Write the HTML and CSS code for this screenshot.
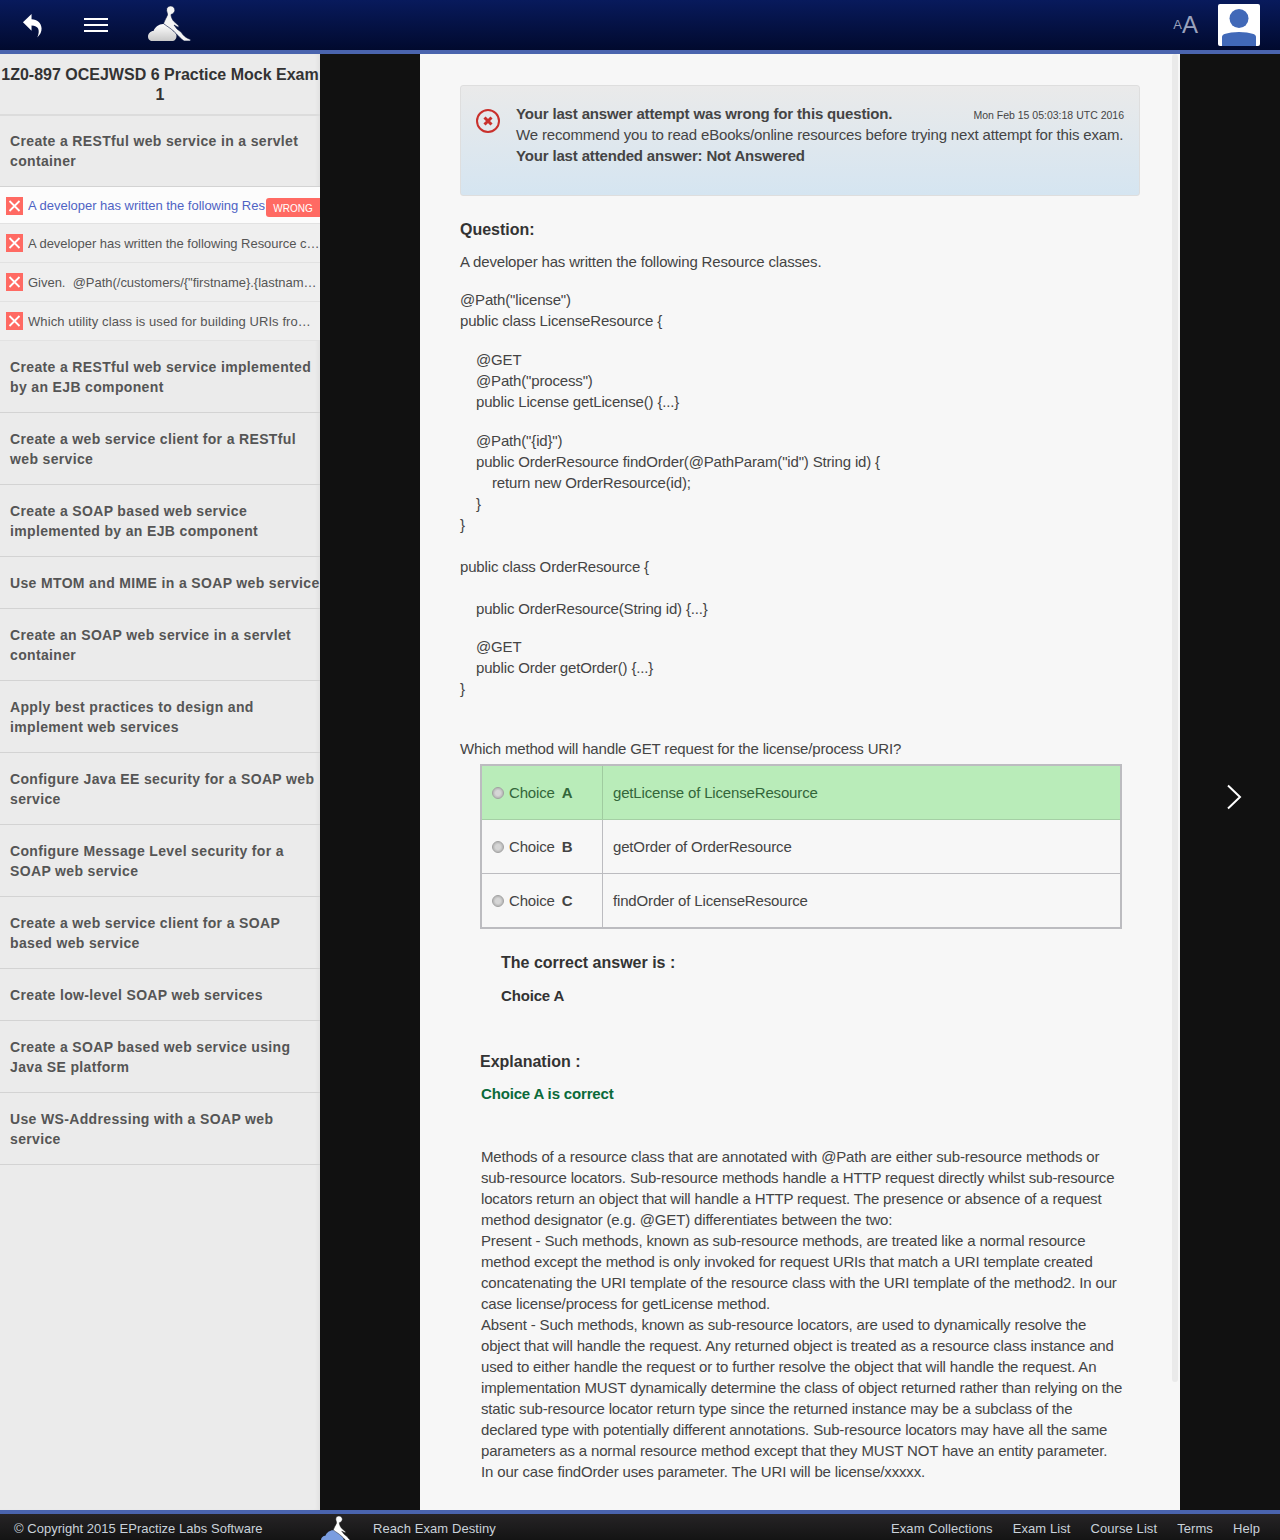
FILE: index.html
```html
<!DOCTYPE html>
<html lang="en">
<head>
<meta charset="utf-8">
<title>1Z0-897 OCEJWSD 6 Practice Mock Exam 1</title>
<link rel="stylesheet" href="styles.css">
</head>
<body>
<svg class="defs" width="0" height="0">
  <defs>
    <linearGradient id="cloud-white" x1="0" y1="0" x2="0" y2="1"><stop offset="0" stop-color="#ffffff"/><stop offset="1" stop-color="#c8c8c8"/></linearGradient>
  </defs>
  <symbol id="logo" viewBox="0 0 44 38">
    <path class="logo-cloud" d="M3 37C.5 36 0 34 0 32.500 0 29.500 2.500 27 5.500 27 7 23 11 20 15 20c5 0 9 3 10 7 2 .5 3.500 2.500 3.500 5 0 2.800-1.500 4.500-3.500 5z"/>
    <path class="logo-man" d="M18.500 6C18.500 3.500 20.500 2 22.500 2c2.500 0 4.500 2 4.300 4.500C26.500 8.500 25 10 23 10.500c0 2 1 4.500 2.500 6.500l5.500 5-.8 1.200-4.200-2.200 3 4 4 3C35 31 37.500 34 42.500 35.500V37H36c-3-2-6-5.500-8-7.500-2-2-4-4-7-6-2-1.500-4-2.500-5.500-4 1-3 3-6 4-8.500.3-1.500-1-3.500-1-5.500z"/>
  </symbol>
</svg>
<header class="topbar">
  <div class="topbar-left">
    <svg class="back" viewBox="0 0 22 26"><path d="M1 9.500 10 1v5.500c6 .3 10 3.500 10.500 9.500.2 3.500-1.500 7-4.500 9.500 1.500-3 2-6.500 1-9-.8-2-3.500-3.500-7-3.500v5.500z"/></svg>
    <div class="burger"><span></span><span></span><span></span></div>
    <svg class="logo"><use href="#logo"/></svg>
  </div>
  <div class="topbar-right">
    <span class="font-size"><span class="a-small">A</span><span class="a-big">A</span></span>
    <div class="avatar">
      <svg viewBox="0 0 42 42"><circle cx="21" cy="14.500" r="9.500"/><path d="M4 42V33c0-1.500 1-2.500 2.500-3 4-1.300 9-2 14.500-2s10.500.7 14.500 2c1.500.5 2.500 1.500 2.500 3v9z"/></svg>
    </div>
  </div>
</header>
<main class="layout">
  <aside class="sidebar">
    <h1 class="side-title">1Z0-897 OCEJWSD 6 Practice Mock Exam 1</h1>
    <div class="group first">Create a RESTful web service in a servlet container</div>
    <div class="sub active"><i class="x"><svg viewBox="0 0 17 17"><path d="M3.500 3.500l10 10M13.500 3.500l-10 10"/></svg></i><span class="sub-text">A developer has written the following Res</span><span class="badge">WRONG</span></div>
    <div class="sub narrow"><i class="x"><svg viewBox="0 0 17 17"><path d="M3.500 3.500l10 10M13.500 3.500l-10 10"/></svg></i><span class="sub-text">A developer has written the following Resource classes.</span></div>
    <div class="sub"><i class="x"><svg viewBox="0 0 17 17"><path d="M3.500 3.500l10 10M13.500 3.500l-10 10"/></svg></i><span class="sub-text">Given.&nbsp;&nbsp;@Path(/customers/{"firstname}.{lastname}") public class</span></div>
    <div class="sub wide"><i class="x"><svg viewBox="0 0 17 17"><path d="M3.500 3.500l10 10M13.500 3.500l-10 10"/></svg></i><span class="sub-text">Which utility class is used for building URIs from resources?</span></div>
    <div class="group">Create a RESTful web service implemented by an EJB component</div>
    <div class="group">Create a web service client for a RESTful web service</div>
    <div class="group">Create a SOAP based web service implemented by an EJB component</div>
    <div class="group single">Use MTOM and MIME in a SOAP web service</div>
    <div class="group">Create an SOAP web service in a servlet container</div>
    <div class="group">Apply best practices to design and implement web services</div>
    <div class="group">Configure Java EE security for a SOAP web service</div>
    <div class="group">Configure Message Level security for a SOAP web service</div>
    <div class="group">Create a web service client for a SOAP based web service</div>
    <div class="group single">Create low-level SOAP web services</div>
    <div class="group">Create a SOAP based web service using Java SE platform</div>
    <div class="group">Use WS-Addressing with a SOAP web service</div>
  </aside>
  <div class="stage">
    <section class="content">
      <div class="alert">
        <svg class="alert-icon" viewBox="0 0 26 26"><circle cx="13" cy="13" r="11" /><path d="M9.500 9.500l7 7M16.500 9.500l-7 7"/></svg>
        <div class="alert-body">
          <div class="alert-head"><b>Your last answer attempt was wrong for this question.</b><span class="stamp">Mon Feb 15 05:03:18 UTC 2016</span></div>
          <div>We recommend you to read eBooks/online resources before trying next attempt for this exam.</div>
          <div><b>Your last attended answer: Not Answered</b></div>
        </div>
      </div>
      <h2 class="q-title">Question:</h2>
      <p class="code first">A developer has written the following Resource classes.</p>
      <p class="code">@Path("license")<br>public class LicenseResource {</p>
      <p class="code indent">@GET<br>@Path("process")<br>public License getLicense() {...}</p>
      <p class="code indent">@Path("{id}")<br>public OrderResource findOrder(@PathParam("id") String id) {<br><span class="indent-line">return new OrderResource(id);</span><br>}</p>
      <p class="code tight">}</p>
      <p class="code gap">public class OrderResource {</p>
      <p class="code gap indent">public OrderResource(String id) {...}</p>
      <p class="code indent snug">@GET<br>public Order getOrder() {...}</p>
      <p class="code tight">}</p>
      <p class="code ask">Which method will handle GET request for the license/process URI?</p>
      <div class="choices">
        <div class="choice right">
          <label class="c-key"><span class="radio"></span>Choice <b>A</b></label>
          <div class="c-val">getLicense of LicenseResource</div>
        </div>
        <div class="choice">
          <label class="c-key"><span class="radio"></span>Choice <b>B</b></label>
          <div class="c-val">getOrder of OrderResource</div>
        </div>
        <div class="choice">
          <label class="c-key"><span class="radio"></span>Choice <b>C</b></label>
          <div class="c-val">findOrder of LicenseResource</div>
        </div>
      </div>
      <h3 class="correct">The correct answer is :</h3>
      <p class="correct-val">Choice A</p>
      <h3 class="exp-title">Explanation :</h3>
      <p class="exp-ok">Choice A is correct</p>
      <p class="exp">Methods of a resource class that are annotated with @Path are either sub-resource methods or sub-resource locators. Sub-resource methods handle a HTTP request directly whilst sub-resource locators return an object that will handle a HTTP request. The presence or absence of a request method designator (e.g. @GET) differentiates between the two:<br>Present - Such methods, known as sub-resource methods, are treated like a normal resource method except the method is only invoked for request URIs that match a URI template created concatenating the URI template of the resource class with the URI template of the method2. In our case license/process for getLicense method.<br>Absent - Such methods, known as sub-resource locators, are used to dynamically resolve the object that will handle the request. Any returned object is treated as a resource class instance and used to either handle the request or to further resolve the object that will handle the request. An implementation MUST dynamically determine the class of object returned rather than relying on the static sub-resource locator return type since the returned instance may be a subclass of the declared type with potentially different annotations. Sub-resource locators may have all the same parameters as a normal resource method except that they MUST NOT have an entity parameter.<br>In our case findOrder uses parameter. The URI will be license/xxxxx.</p>
      <div class="scrollbar"></div>
    </section>
    <svg class="next" viewBox="0 0 16 26"><path d="M2 1.500 14 13 2 24.500"/></svg>
  </div>
</main>
<footer class="footer">
  <div class="foot-left">
    <span class="copy">© Copyright 2015 EPractize Labs Software</span>
    <svg class="foot-logo"><use href="#logo"/></svg>
    <span class="tag">Reach Exam Destiny</span>
  </div>
  <nav class="foot-nav"><a>Exam Collections</a><a>Exam List</a><a>Course List</a><a>Terms</a><a>Help</a></nav>
</footer>
</body>
</html>
```
FILE: styles.css
```css
* { box-sizing: border-box; }
html, body { margin: 0; height: 100%; }
body {
  height: 1540px; overflow: hidden; display: flex; flex-direction: column;
  font-family: "Liberation Sans", Arial, sans-serif; font-size: 15px; letter-spacing: -.16px; color: #444;
  background: #111;
}
.defs { position: absolute; }
.topbar {
  height: 54px; flex: none; display: flex; justify-content: space-between;
  background: linear-gradient(#081a5c, #010a2e); border-bottom: 4px solid #4a64ae;
}
.topbar-left { display: flex; align-items: flex-start; padding-left: 22px; }
.back { width: 21px; height: 25px; margin-top: 13px; fill: #fff; }
.burger { width: 24px; margin: 18px 0 0 41px; display: flex; flex-direction: column; gap: 4px; }
.burger span { height: 2px; background: #fff; display: block; }
.logo { width: 44px; height: 38px; margin: 4px 0 0 40px; --cloud: url(#cloud-white); --man: #f4f4f4; --gap: #04103f; }
.logo-cloud { fill: var(--cloud); }
.logo-man { fill: var(--man); stroke: var(--gap); stroke-width: .6; }
.topbar-right { display: flex; align-items: flex-start; padding-right: 20px; }
.font-size { color: #9aa2bd; margin: 13px 20px 0 0; height: 24px; line-height: 24px; display: flex; align-items: center; letter-spacing: 0; }
.a-small { font-size: 13px; }
.a-big { font-size: 24px; }
.avatar { width: 42px; height: 42px; margin-top: 4px; background: #fff; border-radius: 2px; overflow: hidden; }
.avatar svg { display: block; width: 42px; height: 42px; fill: #4169b8; }

.layout { flex: 1; display: flex; min-height: 0; }
.sidebar {
  width: 320px; flex: none; background: #ebebeb; overflow: hidden;
  box-shadow: inset -4px 0 4px -2px rgba(0,0,0,.05);
}
.side-title {
  margin: 0; height: 62px; padding: 11px 0 0; text-align: center; font-size: 16px; line-height: 20px; letter-spacing: 0;
  font-weight: bold; color: #333; border-bottom: 2px solid #dcdcdc;
}
.group {
  height: 72px; padding: 16px 0 0 10px; font-size: 14px; line-height: 20px; font-weight: bold; color: #555;
  letter-spacing: .35px; border-bottom: 1px solid #d3d3d3;
}
.group.first { height: 71px; padding-top: 15px; }
.group.single { height: 52px; white-space: nowrap; }
.sub {
  height: 39px; position: relative; display: flex; align-items: center; padding: 0 0 0 6px; background: #efefef;
  border-bottom: 1px solid #e2e2e2; font-size: 13px; letter-spacing: -.02px; color: #555;
}
.sub.narrow { letter-spacing: -.04px; }
.sub.wide { letter-spacing: .08px; }
.sub.active { height: 37px; padding-top: 1px; background: #fcfcfc; color: #4f63c4; }
.x { width: 17px; height: 18px; flex: none; background: #ff6a63; margin-right: 5px; display: block; }
.x svg { display: block; width: 17px; height: 18px; fill: none; stroke: #fff; stroke-width: 1.800; }
.sub-text { white-space: nowrap; overflow: hidden; text-overflow: ellipsis; }
.badge {
  position: absolute; right: 0; top: 11px; height: 19px; width: 54px; background: #ff6a63; color: #fff; letter-spacing: 0;
  font-size: 10px; line-height: 21px; text-align: center; border-radius: 3px 0 0 3px;
}

.stage { flex: 1; position: relative; display: flex; justify-content: center; padding: 0 100px; background: #111; }
.content {
  width: 760px; position: relative; background: #f7f7f7; padding: 31px 40px 0; overflow: hidden; line-height: 21px;
}
.alert {
  height: 111px; display: flex; padding: 17px 15px 0; border: 1px solid #dedede; border-radius: 3px;
  background: linear-gradient(#eaeaea, #d5e5f1);
}
.alert-icon { width: 26px; height: 26px; flex: none; margin: 5px 15px 0 -1px; fill: none; stroke: #c9302c; }
.alert-icon circle { stroke-width: 2; }
.alert-icon path { stroke-width: 3; }
.alert-body { flex: 1; min-width: 0; }
.alert-head { display: flex; justify-content: space-between; height: 21px; }
.stamp { font-size: 10.500px; letter-spacing: 0; line-height: 25px; }
.q-title { margin: 14px 0 0; font-size: 16px; line-height: 40px; height: 41px; color: #333; font-weight: bold; letter-spacing: 0; }
.code { margin: 18px 0 0; }
.code.first { margin-top: 0; height: 20px; }
.code.indent { padding-left: 16px; }
.indent-line { display: inline-block; padding-left: 16px; }
.code.tight { margin-top: 0; }
.code.gap { margin-top: 21px; }
.code.snug { margin-top: 17px; }
.code.ask { margin-top: 39px; }
.choices { margin: 5px 18px 0 20px; border: 2px solid #bcbcc0; height: 165px; }
.choice { height: 54px; display: flex; border-bottom: 1px solid #bcbcc0; }
.choice:last-child { height: 53px; border-bottom: 0; }
.choice.right { background: #b9ecb9; color: #33663a; border-bottom-color: #a5cfa5; }
.c-key { width: 121px; flex: none; display: flex; align-items: center; padding-left: 10px; border-right: 1px solid #bcbcc0; white-space: pre; }
.right .c-key { border-right-color: #9fcb9f; }
.c-key b { margin-left: 3px; }
.radio {
  width: 12px; height: 12px; border-radius: 50%; border: 1px solid #a0a0a0; margin-right: 5px;
  background: radial-gradient(circle, #d6d6d6 0 35%, #bcbcbc 65%, #e6e6e6 100%);
}
.c-val { display: flex; align-items: center; padding-left: 10px; }
.correct { margin: 24px 0 0 41px; font-size: 16px; color: #333; line-height: 20px; letter-spacing: 0; }
.correct-val { margin: 12px 0 0 41px; font-weight: bold; color: #333; line-height: 21px; }
.exp-title { margin: 46px 0 0 20px; font-size: 16px; line-height: 20px; color: #333; letter-spacing: 0; }
.exp-ok { margin: 12px 0 0 21px; font-weight: bold; color: #0a6a3a; line-height: 20px; }
.exp { margin: 42px 14px 0 21px; line-height: 21px; }
.scrollbar { position: absolute; right: 2px; top: 0; width: 6px; height: 1328px; background: #eaeaea; border-radius: 3px; }
.next { position: absolute; left: 906px; top: 730px; width: 16px; height: 26px; fill: none; stroke: #fff; stroke-width: 2; }

.footer {
  height: 30px; flex: none; display: flex; justify-content: space-between; border-top: 4px solid #4a64ae;
  background: linear-gradient(#262426, #141414); color: #c9d2da; font-size: 13px; letter-spacing: .08px; line-height: 29px; overflow: hidden;
}
.foot-left { display: flex; padding-left: 14px; }
.copy { letter-spacing: .03px; width: 249px; white-space: nowrap; }
.foot-logo { width: 35px; height: 31px; flex: none; margin: 0 0 0 58px; --cloud: #7a9de0; --man: #fff; --gap: #1e1e1e; }
.tag { margin-left: 17px; }
.foot-nav { display: flex; gap: 20px; padding-right: 20px; }
```
